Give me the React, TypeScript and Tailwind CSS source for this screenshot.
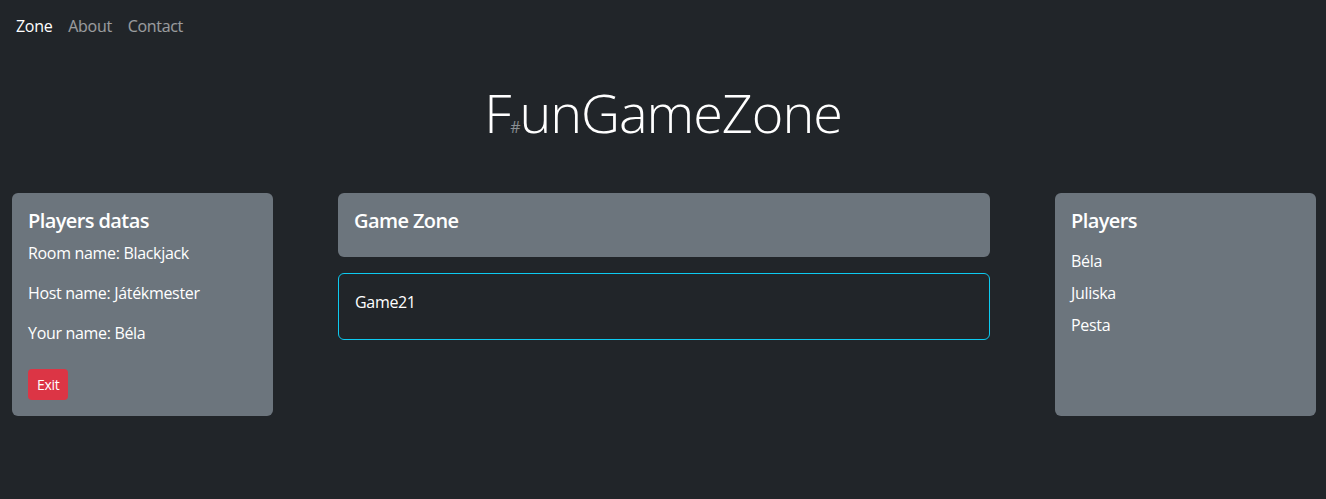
import React from "react";

const players = ["Béla", "Juliska", "Pesta"];

function InfoCard() {
  return (
    <div className="w-[261px] shrink-0 rounded-md bg-[#6c757d] p-4 text-white">
      <h5 className="mb-2 text-[20px] leading-6 font-semibold tracking-[-0.03em]">Players datas</h5>
      <p className="mb-4 leading-6">Room name: Blackjack</p>
      <p className="mb-4 leading-6">Host name: Játékmester</p>
      <p className="mb-6 leading-6">Your name: Béla</p>
      <button
        type="button"
        className="h-[31px] rounded-[4px] bg-[#dc3545] px-[9px] text-[14px] leading-[21px] text-white"
      >
        Exit
      </button>
    </div>
  );
}

function PlayersCard() {
  return (
    <div className="w-[261px] shrink-0 rounded-md bg-[#6c757d] p-4 text-white">
      <h5 className="mb-4 text-[20px] leading-6 font-semibold tracking-[-0.03em]">Players</h5>
      <ul className="flex flex-col gap-2">
        {players.map((p) => (
          <li key={p} className="leading-6">
            {p}
          </li>
        ))}
      </ul>
    </div>
  );
}

export default function App() {
  return (
    <div
      className="min-h-[499px] bg-[#212529] tracking-[-0.02em] text-white"
      style={{ fontFamily: '"Open Sans", "Noto Sans", sans-serif' }}
    >
      <nav className="flex items-center gap-4 px-4 pt-[6px] pb-[10px]">
        <a className="py-2 leading-6 text-white">Zone</a>
        <a className="py-2 leading-6 text-white/55">About</a>
        <a className="py-2 leading-6 text-white/55">Contact</a>
      </nav>

      <h1 className="mt-[23px] text-center text-[54px] leading-[67px] font-light tracking-[-0.02em]">
        F<span className="text-[16px] leading-none font-normal text-[#8a8f94]">#</span>unGameZone
      </h1>

      <div className="mt-[47px] flex items-stretch justify-between pr-[10px] pl-3">
        <InfoCard />
        <div className="flex w-[652px] flex-col gap-4 self-start">
          <div className="rounded-md bg-[#6c757d] p-4 pb-6">
            <h5 className="text-[20px] leading-6 font-semibold tracking-[-0.03em]">Game Zone</h5>
          </div>
          <div className="rounded-md border border-[#0dcaf0] px-4 pt-4 pb-[25px]">
            <p className="leading-6">Game21</p>
          </div>
        </div>
        <PlayersCard />
      </div>
    </div>
  );
}
